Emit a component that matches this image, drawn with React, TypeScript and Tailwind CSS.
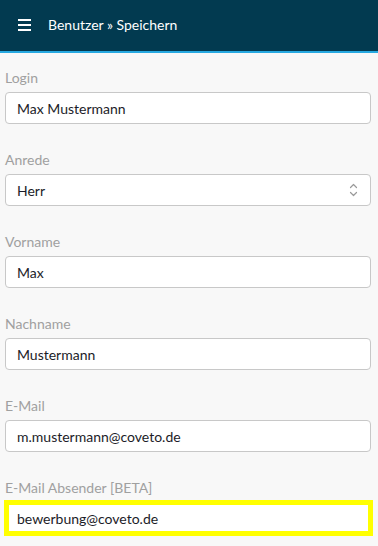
const fields = [
  { label: 'Login', value: 'Max Mustermann' },
  { label: 'Anrede', value: 'Herr', select: true },
  { label: 'Vorname', value: 'Max' },
  { label: 'Nachname', value: 'Mustermann' },
  { label: 'E-Mail', value: 'm.mustermann@coveto.de' },
];

function Chevrons() {
  return (
    <svg width="9" height="14" viewBox="0 0 9 14" fill="none" stroke="#9a9a9a" strokeWidth="1.2" strokeLinecap="round" strokeLinejoin="round">
      <path d="M1.5 4.5 L4.5 1.5 L7.5 4.5" />
      <path d="M1.5 9.5 L4.5 12.5 L7.5 9.5" />
    </svg>
  );
}

export default function App() {
  return (
    <div className="min-h-[546px] bg-[#f8f8f8] text-[14px]" style={{ fontFamily: "Lato, 'Noto Sans', sans-serif" }}>
      {/* Header */}
      <header className="h-[53px] bg-[#023a50] border-b-2 border-[#27a9e1] flex items-center">
        <div className="w-[48px] flex justify-center pl-[2px] pb-[2px]">
          <svg width="14" height="12" viewBox="0 0 14 12" fill="#ffffff">
            <rect x="0" y="0" width="13" height="2" />
            <rect x="0" y="5" width="13" height="2" />
            <rect x="0" y="10" width="13" height="2" />
          </svg>
        </div>
        <span className="text-white text-[14px] pb-[2px]">Benutzer » Speichern</span>
      </header>

      {/* Form */}
      <div className="pl-[5px] pr-[7px] pt-[15px]">
        {fields.map((f) => (
          <div key={f.label} className="mb-[26px]">
            <div className="h-[20px] leading-[20px] text-[#a0a0a0] mb-[4px]">{f.label}</div>
            <div className="h-[32px] bg-white border border-[#c8c8c8] rounded-[4px] flex items-center justify-between pl-[11px] pr-[12px] text-[#1c1c28]">
              <span>{f.value}</span>
              {f.select && <Chevrons />}
            </div>
          </div>
        ))}
        <div>
          <div className="h-[20px] leading-[20px] text-[#a0a0a0] mb-[4px]">E-Mail Absender [BETA]</div>
          <div className="h-[36px] -mt-[2px] -ml-px -mr-[2px] bg-white border-[5px] border-[#ffff00] flex items-center pl-[8px] text-[#1c1c28]">
            bewerbung@coveto.de
          </div>
        </div>
      </div>
    </div>
  );
}
